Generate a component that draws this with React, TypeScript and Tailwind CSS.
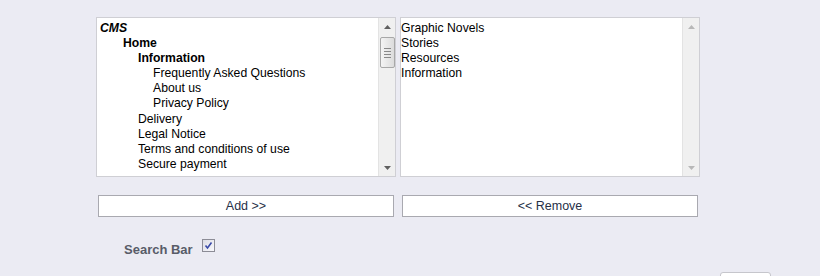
import React from "react";

const tree: { label: string; indent: number; weight?: string }[] = [
  { label: "CMS", indent: 3, weight: "italic" },
  { label: "Home", indent: 26, weight: "bold" },
  { label: "Information", indent: 41, weight: "bold" },
  { label: "Frequently Asked Questions", indent: 56 },
  { label: "About us", indent: 56 },
  { label: "Privacy Policy", indent: 56 },
  { label: "Delivery", indent: 41 },
  { label: "Legal Notice", indent: 41 },
  { label: "Terms and conditions of use", indent: 41 },
  { label: "Secure payment", indent: 41 },
];

const selected = ["Graphic Novels", "Stories", "Resources", "Information"];

const Scrollbar: React.FC<{ active: boolean }> = ({ active }) => (
  <div className="flex w-[17px] shrink-0 flex-col items-center border-l border-[#e3e3e3] bg-[#f0f0f0]">
    <div className="flex h-[17px] w-full items-center justify-center">
      <svg width="7" height="4" viewBox="0 0 7 4">
        <path d="M3.5 0 L7 4 L0 4 Z" fill={active ? "#606060" : "#b8b8b8"} />
      </svg>
    </div>
    {active && (
      <div className="mt-[2px] flex h-[31px] w-[15px] flex-col items-center justify-center gap-[2px] rounded-[2px] border border-[#a8a8a8] bg-gradient-to-r from-[#f4f4f4] to-[#dcdcdc]">
        <div className="h-px w-[7px] bg-[#888]" />
        <div className="h-px w-[7px] bg-[#888]" />
        <div className="h-px w-[7px] bg-[#888]" />
        <div className="h-px w-[7px] bg-[#888]" />
      </div>
    )}
    <div className="flex-1" />
    <div className="flex h-[17px] w-full items-center justify-center">
      <svg width="7" height="4" viewBox="0 0 7 4">
        <path d="M0 0 L7 0 L3.5 4 Z" fill={active ? "#606060" : "#b8b8b8"} />
      </svg>
    </div>
  </div>
);

export default function App() {
  return (
    <div className="h-[276px] w-[820px] overflow-hidden bg-[#ebebf3] font-['Liberation_Sans',Arial,sans-serif]">
      <div className="flex flex-col pl-[96px] pt-[17px]">
        <div className="flex gap-[4px]">
          <div className="flex h-[160px] w-[300px] border border-[#cfcfd4] bg-white">
            <div className="flex-1 pt-[3px] text-[12.2px] leading-[15.1px] text-black">
              {tree.map((t) => (
                <div
                  key={t.label}
                  style={{ paddingLeft: t.indent }}
                  className={
                    t.weight === "bold"
                      ? "font-bold"
                      : t.weight === "italic"
                      ? "font-bold italic"
                      : ""
                  }
                >
                  {t.label}
                </div>
              ))}
            </div>
            <Scrollbar active />
          </div>
          <div className="flex h-[160px] w-[300px] border border-[#cfcfd4] bg-white">
            <div className="flex-1 pt-[3px] text-[12.2px] leading-[15.1px] text-black">
              {selected.map((s) => (
                <div key={s}>{s}</div>
              ))}
            </div>
            <Scrollbar active={false} />
          </div>
        </div>

        <div className="mt-[18px] flex gap-[8px] pl-[2px]">
          <button className="h-[22px] w-[296px] border border-[#a9a9b0] bg-white text-[12.5px] text-[#263047]">
            Add &gt;&gt;
          </button>
          <button className="h-[22px] w-[296px] border border-[#a9a9b0] bg-white text-[12.5px] text-[#263047]">
            &lt;&lt; Remove
          </button>
        </div>

        <div className="mt-[22px] flex items-start gap-[9px] pl-[28px]">
          <span className="mt-[3px] text-[13px] font-bold leading-[15px] text-[#585c68]">Search Bar</span>
          <span className="flex h-[13px] w-[13px] items-center justify-center border border-[#8c8c96] bg-gradient-to-br from-[#dcdce4] to-[#f8f8fc]">
            <svg width="9" height="9" viewBox="0 0 9 9">
              <path d="M1.5 4.5 L3.5 7 L7.5 1.5" stroke="#3a4aa8" strokeWidth="1.6" fill="none" />
            </svg>
          </span>
        </div>

        <div className="mt-[15px] flex justify-end pr-[49px]">
          <div className="h-[20px] w-[51px] rounded-t-[3px] border border-[#c6c6cc] bg-white" />
        </div>
      </div>
    </div>
  );
}
